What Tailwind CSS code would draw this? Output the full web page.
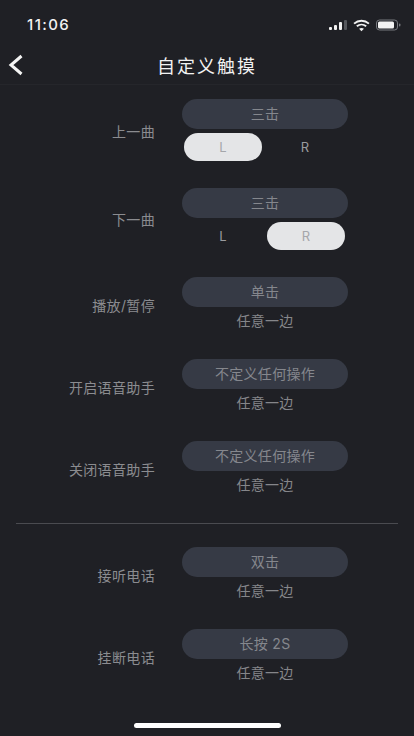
<!DOCTYPE html>
<html lang="zh">
<head>
  <meta charset="UTF-8" />
  <meta name="viewport" content="width=device-width, initial-scale=1.0" />
  <title>自定义触摸</title>
  <script src="https://cdn.jsdelivr.net/npm/@tailwindcss/browser@4"></script>
</head>
<body class="bg-[#1f2025] font-['Inter','Noto_Sans_CJK_SC',sans-serif]">
  <div class="relative w-[414px] h-[736px] overflow-hidden bg-[#1f2025]">

    <!-- status bar -->
    <div class="flex items-center justify-between h-[50px] pl-[27px] pr-[13px]">
      <span class="text-[15px] font-medium tracking-[1.4px] text-[#f2f2f2]">11:06</span>
      <div class="flex items-center gap-[6px]">
        <svg width="18" height="12" viewBox="0 0 18 12">
          <rect x="0" y="8" width="3" height="3" rx="1" fill="#f2f2f2" />
          <rect x="5" y="6" width="3" height="5" rx="1" fill="#f2f2f2" />
          <rect x="10" y="3" width="3" height="8" rx="1" fill="#f2f2f2" />
          <rect x="15" y="1" width="3" height="10" rx="1" fill="#55575c" />
        </svg>
        <svg width="17" height="13" viewBox="0 0 16 12" fill="none" stroke="#f2f2f2" stroke-width="1.8">
          <path d="M1 4.2C5 .6 11 .6 15 4.2" />
          <path d="M3.6 6.8c2.6-2.2 6.2-2.2 8.8 0" />
          <path d="M8 11.4 5.7 9.1c1.3-1.1 3.3-1.1 4.6 0z" fill="#f2f2f2" stroke="none" />
        </svg>
        <svg width="25" height="12" viewBox="0 0 25 12">
          <rect x="0.5" y="1" width="21" height="10" rx="3" fill="none" stroke="#77797e" />
          <rect x="2" y="2.5" width="16" height="7" rx="1.5" fill="#f2f2f2" />
          <rect x="23" y="4.5" width="1.4" height="3" rx="0.7" fill="#77797e" />
        </svg>
      </div>
    </div>

    <!-- nav -->
    <div class="relative flex items-center justify-center h-[35px] border-b border-[#25262b]">
      <svg class="absolute left-[8px] top-[4px]" width="16" height="22" viewBox="0 0 16 22" fill="none" stroke="#f4f4f4" stroke-width="3">
        <path d="M13.5 2 3 11l10.5 9" />
      </svg>
      <h1 class="text-[18px] font-normal tracking-[2px] text-[#f2f2f2] -mt-[1px]">自定义触摸</h1>
    </div>

    <div class="pt-[14px]">
      <!-- 上一曲 -->
      <div class="flex items-center h-[66px]">
        <div class="w-[155px] pb-[2px] text-right text-[14px] tracking-[0.35px] text-[#8b8c90]">上一曲</div>
        <div class="ml-[27px] w-[166px] h-full">
          <div class="flex items-center justify-center h-[30px] pb-[2px] rounded-full bg-[#363a45] text-[14px] tracking-[0.3px] text-[#85878d]">三击</div>
          <div class="flex items-center justify-between mt-[4px] pl-[2px] pr-[3px] text-[13px]">
            <div class="flex items-center justify-center w-[78px] h-[28px] pt-[1px] rounded-full bg-[#e4e5e7] text-[#a4a6aa]">L</div>
            <div class="flex items-center justify-center w-[78px] h-[28px] pt-[1px] pr-[2px] text-[#9a9b9f]">R</div>
          </div>
        </div>
      </div>

      <!-- 下一曲 -->
      <div class="flex items-center h-[66px] mt-[23px]">
        <div class="w-[155px] pb-[3px] text-right text-[14px] tracking-[0.35px] text-[#8b8c90]">下一曲</div>
        <div class="ml-[27px] w-[166px] h-full">
          <div class="flex items-center justify-center h-[30px] pb-[2px] rounded-full bg-[#363a45] text-[14px] tracking-[0.3px] text-[#85878d]">三击</div>
          <div class="flex items-center justify-between mt-[4px] pl-[2px] pr-[3px] text-[13px]">
            <div class="flex items-center justify-center w-[78px] h-[28px] pt-[1px] text-[#9a9b9f]">L</div>
            <div class="flex items-center justify-center w-[78px] h-[28px] pt-[1px] rounded-full bg-[#e4e5e7] text-[#a4a6aa]">R</div>
          </div>
        </div>
      </div>

      <!-- 播放/暂停 -->
      <div class="flex items-center h-[58px] mt-[23px]">
        <div class="w-[155px] pb-[2px] text-right text-[14px] tracking-[0.35px] text-[#8b8c90]">播放/暂停</div>
        <div class="ml-[27px] w-[166px]">
          <div class="flex items-center justify-center h-[30px] pb-[2px] rounded-full bg-[#363a45] text-[14px] tracking-[0.3px] text-[#85878d]">单击</div>
          <div class="flex items-center justify-center h-[28px] pb-[1px] text-[14px] tracking-[0.3px] text-[#85868a]">任意一边</div>
        </div>
      </div>

      <!-- 开启语音助手 -->
      <div class="flex items-center h-[58px] mt-[24px]">
        <div class="w-[155px] pb-[2px] text-right text-[14px] tracking-[0.35px] text-[#8b8c90]">开启语音助手</div>
        <div class="ml-[27px] w-[166px]">
          <div class="flex items-center justify-center h-[30px] pb-[2px] rounded-full bg-[#363a45] text-[14px] tracking-[0.3px] text-[#85878d]">不定义任何操作</div>
          <div class="flex items-center justify-center h-[28px] pb-[1px] text-[14px] tracking-[0.3px] text-[#85868a]">任意一边</div>
        </div>
      </div>

      <!-- 关闭语音助手 -->
      <div class="flex items-center h-[58px] mt-[24px]">
        <div class="w-[155px] pb-[1px] text-right text-[14px] tracking-[0.35px] text-[#8b8c90]">关闭语音助手</div>
        <div class="ml-[27px] w-[166px]">
          <div class="flex items-center justify-center h-[30px] pb-[2px] rounded-full bg-[#363a45] text-[14px] tracking-[0.3px] text-[#85878d]">不定义任何操作</div>
          <div class="flex items-center justify-center h-[28px] pb-[1px] text-[14px] tracking-[0.3px] text-[#85868a]">任意一边</div>
        </div>
      </div>

      <div class="mx-[16px] mt-[24px] mb-[23px] h-px bg-[#4a4b50]"></div>

      <!-- 接听电话 -->
      <div class="flex items-center h-[58px]">
        <div class="w-[155px] pb-[2px] text-right text-[14px] tracking-[0.35px] text-[#8b8c90]">接听电话</div>
        <div class="ml-[27px] w-[166px]">
          <div class="flex items-center justify-center h-[30px] pb-[2px] rounded-full bg-[#363a45] text-[14px] tracking-[0.3px] text-[#85878d]">双击</div>
          <div class="flex items-center justify-center h-[28px] pb-[1px] text-[14px] tracking-[0.3px] text-[#85868a]">任意一边</div>
        </div>
      </div>

      <!-- 挂断电话 -->
      <div class="flex items-center h-[58px] mt-[24px]">
        <div class="w-[155px] pb-[1px] text-right text-[14px] tracking-[0.35px] text-[#8b8c90]">挂断电话</div>
        <div class="ml-[27px] w-[166px]">
          <div class="flex items-center justify-center h-[30px] pb-[2px] rounded-full bg-[#363a45] text-[14px] tracking-[0.3px] text-[#85878d]">长按 2S</div>
          <div class="flex items-center justify-center h-[28px] pb-[1px] text-[14px] tracking-[0.3px] text-[#85868a]">任意一边</div>
        </div>
      </div>
    </div>

    <!-- home indicator -->
    <div class="absolute left-[134px] top-[723px] w-[147px] h-[5px] rounded-full bg-white"></div>
  </div>
</body>
</html>
